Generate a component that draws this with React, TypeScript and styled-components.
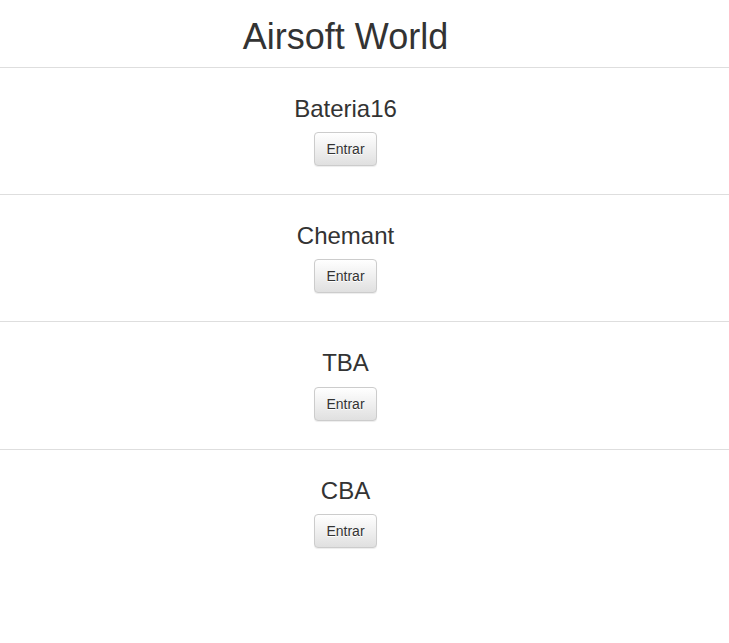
import React from "react";
import styled, { createGlobalStyle } from "styled-components";

const Global = createGlobalStyle`
  html, body { margin: 0; padding: 0; background: #fff; }
  body {
    font-family: "Liberation Sans", Arial, Helvetica, sans-serif;
    font-size: 14px;
    line-height: 1.42857;
    color: #333;
  }
`;

const Page = styled.div`
  display: flex;
  flex-direction: column;
`;

const Header = styled.header`
  padding: 17px 38px 10px 0;
  display: flex;
  justify-content: center;
`;

const Title = styled.h1`
  margin: 0;
  font-size: 36px;
  font-weight: 500;
  line-height: 1.1;
  color: #333;
`;

const Section = styled.section`
  border-top: 1px solid #dedede;
  padding: 28px 38px 28px 0;
  display: flex;
  flex-direction: column;
  align-items: center;
`;

const Name = styled.h3`
  margin: 0 0 10px;
  font-size: 24px;
  font-weight: 500;
  line-height: 1.1;
  color: #333;
`;

const Button = styled.button`
  font-family: inherit;
  font-size: 14px;
  line-height: 1.42857;
  padding: 7px 11px 5px;
  color: #333;
  border: 1px solid #ccc;
  border-radius: 4px;
  background-color: #fff;
  background-image: linear-gradient(to bottom, #fff 0, #e0e0e0 100%);
  text-shadow: 0 1px 0 #fff;
  box-shadow: inset 0 1px 0 rgba(255, 255, 255, 0.15), 0 1px 1px rgba(0, 0, 0, 0.075);
  cursor: pointer;
`;

const teams = ["Bateria16", "Chemant", "TBA", "CBA"];

export default function App() {
  return (
    <Page>
      <Global />
      <Header>
        <Title>Airsoft World</Title>
      </Header>
      {teams.map((t) => (
        <Section key={t}>
          <Name>{t}</Name>
          <Button>Entrar</Button>
        </Section>
      ))}
    </Page>
  );
}
